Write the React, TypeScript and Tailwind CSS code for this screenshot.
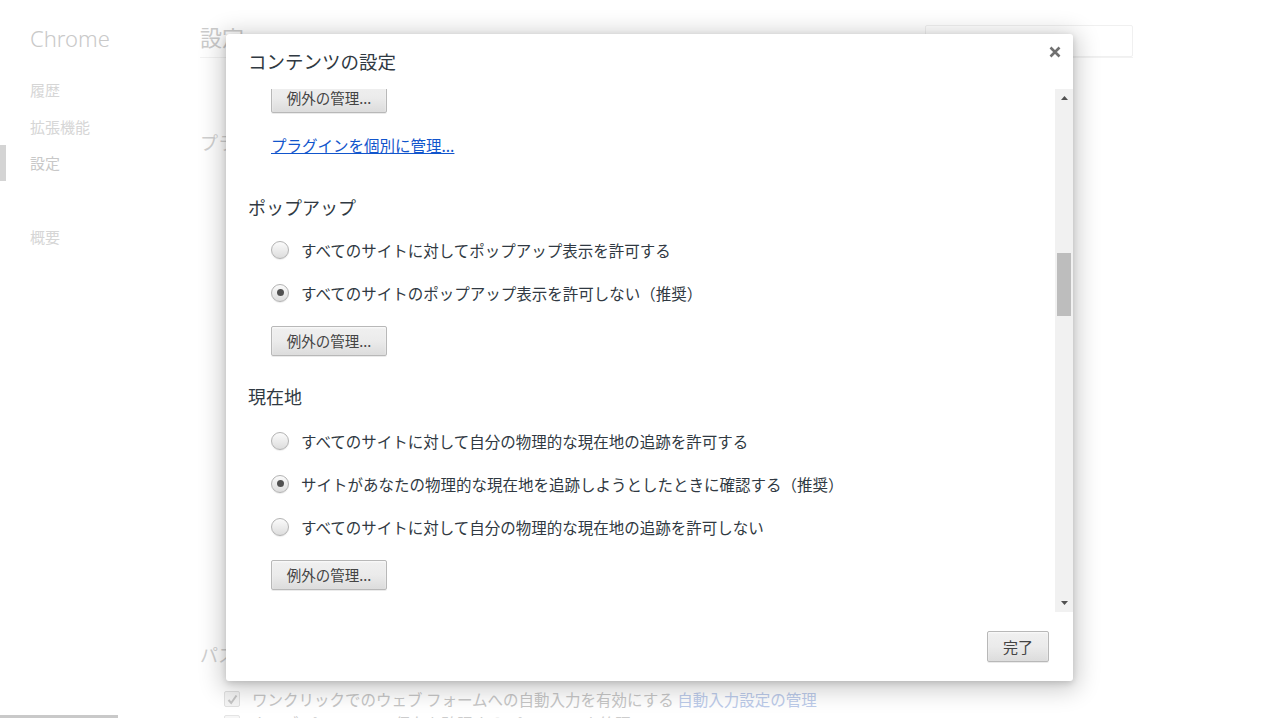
import React from "react";

const jp = "font-['Noto_Sans_CJK_JP','Noto_Sans',sans-serif]";

function Radio({ checked = false }: { checked?: boolean }) {
  return (
    <span className="flex h-[18px] w-[18px] shrink-0 items-center justify-center rounded-full border border-[#b3b3b3] bg-linear-to-b from-[#fbfbfb] to-[#dddddd] shadow-[0_1px_1px_rgba(0,0,0,0.08)]">
      {checked && <span className="h-[7px] w-[7px] rounded-full bg-[#505050] shadow-[0_0_1px_#fff]" />}
    </span>
  );
}

function RadioRow({ label, checked }: { label: string; checked?: boolean }) {
  return (
    <label className="flex h-[43px] items-center gap-[12px] pl-[23px]">
      <Radio checked={checked} />
      <span className="text-[15.5px] leading-[22px] text-[#303942]">{label}</span>
    </label>
  );
}

function ChromeButton({ children, className = "" }: { children: React.ReactNode; className?: string }) {
  return (
    <button
      className={
        "rounded-[2px] border border-[#b8b8b8] bg-linear-to-b from-[#f0f0f0] via-[#ebebeb] to-[#dcdcdc] text-[#444] shadow-[0_1px_0_rgba(0,0,0,0.08),inset_0_1px_2px_rgba(255,255,255,0.75)] " +
        className
      }
    >
      {children}
    </button>
  );
}

function ExceptionsButton({ className = "" }: { className?: string }) {
  return (
    <div className={"pl-[23px] " + className}>
      <ChromeButton className="h-[30px] w-[116px] text-[14.5px] leading-[28px]">例外の管理...</ChromeButton>
    </div>
  );
}

function Arrow({ down = false }: { down?: boolean }) {
  return (
    <div className="flex h-[18px] items-center justify-center">
      <svg width="7" height="4" viewBox="0 0 7 4">
        <path d={down ? "M0 0 L7 0 L3.5 4 Z" : "M0 4 L3.5 0 L7 4 Z"} fill="#505050" />
      </svg>
    </div>
  );
}

function Background() {
  const nav = ["履歴", "拡張機能"];
  return (
    <div className="flex h-[718px] w-[1280px] overflow-hidden bg-white">
      <aside className="flex h-full w-[200px] shrink-0 flex-col">
        <div className="pl-[30px] pt-[22px] font-['Noto_Sans',sans-serif] text-[22px] font-light leading-[32px] text-[#c9c9c9]">
          Chrome
        </div>
        <ul className="mt-[17px] flex flex-col text-[15px] leading-[22px]">
          {nav.map((n) => (
            <li key={n} className="flex h-[37px] items-center pl-[30px] text-[#d6d6d6]">
              {n}
            </li>
          ))}
          <li className="flex h-[36px] items-center border-l-[6px] border-[#d4d4d4] pl-[24px] text-[#c8c8c8]">設定</li>
          <li className="mt-[37px] flex h-[37px] items-center pl-[30px] text-[#d6d6d6]">概要</li>
        </ul>
        <div className="mt-auto h-[3px] w-[118px] bg-[#c9c9c9]" />
      </aside>
      <main className="flex min-w-0 flex-1 flex-col pr-[147px]">
        <header className="flex h-[66px] items-start justify-between border-b border-[#f2f2f2] pt-[22px]">
          <h1 className="text-[22px] leading-[28px] text-[#cbcbcb]">設定</h1>
          <div className="mt-[3px] h-[32px] w-[208px] rounded-[2px] border border-[#f0f0f0]" />
        </header>
        <h2 className="mt-[71px] text-[18px] leading-[26px] text-[#d0d0d0]">プライバシー</h2>
        <h2 className="mt-[486px] text-[18px] leading-[26px] text-[#d0d0d0]">パスワードとフォーム</h2>
        <div className="mt-[21px] flex items-center gap-[12px] pl-[24px]">
          <span className="flex h-[16px] w-[16px] items-center justify-center rounded-[2px] border border-[#e0e0e0] bg-[#f4f4f4]">
            <svg width="11" height="11" viewBox="0 0 11 11">
              <path d="M1.5 6 L4.2 9 L9.5 1.5" fill="none" stroke="#c4c4c4" strokeWidth="2" />
            </svg>
          </span>
          <span className="whitespace-nowrap text-[15.5px] leading-[22px] text-[#c6c6c6]">
            ワンクリックでのウェブ フォームへの自動入力を有効にする <span className="text-[#bccbea]">自動入力設定の管理</span>
          </span>
        </div>
        <div className="mt-[2px] flex items-center gap-[12px] pl-[24px]">
          <span className="h-[16px] w-[16px] rounded-[2px] border border-[#e4e4e4] bg-[#f6f6f6]" />
          <span className="whitespace-nowrap text-[15.5px] leading-[22px] text-[#cccccc]">
            ウェブ パスワードの保存を確認する パスワードを管理
          </span>
        </div>
      </main>
    </div>
  );
}

export default function App() {
  return (
    <div className={"relative h-[718px] w-[1280px] overflow-hidden " + jp}>
      <Background />
      <div className="absolute inset-0 flex items-start pl-[226px] pt-[34px]">
        <div className="relative flex h-[647px] w-[847px] flex-col overflow-hidden rounded-[3px] bg-white shadow-[0_4px_23px_5px_rgba(0,0,0,0.2),0_2px_6px_rgba(0,0,0,0.15)]">
          <div className="h-[55px] shrink-0 pl-[22px] pt-[13px]">
            <h1 className="text-[18.5px] leading-[28px] text-[#303942]">コンテンツの設定</h1>
          </div>
          <button className="absolute right-[11px] top-[11px] flex h-[14px] w-[14px] items-center justify-center">
            <svg width="12" height="12" viewBox="0 0 12 12">
              <path d="M1.5 1.5 L10.5 10.5 M10.5 1.5 L1.5 10.5" stroke="#707070" strokeWidth="2.6" />
            </svg>
          </button>

          <div className="flex h-[523px] shrink-0">
            <div className="min-w-0 flex-1 overflow-hidden pl-[22px]">
              <ExceptionsButton className="-mt-[6px]" />
              <div className="mt-[21px] pl-[23px] text-[15.5px] leading-[22px]">
                <a className="text-[#1155cc] underline">プラグインを個別に管理...</a>
              </div>

              <h2 className="mt-[38px] text-[18px] leading-[27px] text-[#303942]">ポップアップ</h2>
              <div className="mt-[7px] flex flex-col">
                <RadioRow label="すべてのサイトに対してポップアップ表示を許可する" />
                <RadioRow label="すべてのサイトのポップアップ表示を許可しない（推奨）" checked />
              </div>
              <ExceptionsButton className="mt-[12px]" />

              <h2 className="mt-[27px] text-[18px] leading-[27px] text-[#303942]">現在地</h2>
              <div className="mt-[9px] flex flex-col">
                <RadioRow label="すべてのサイトに対して自分の物理的な現在地の追跡を許可する" />
                <RadioRow label="サイトがあなたの物理的な現在地を追跡しようとしたときに確認する（推奨）" checked />
                <RadioRow label="すべてのサイトに対して自分の物理的な現在地の追跡を許可しない" />
              </div>
              <ExceptionsButton className="mt-[12px]" />

              <h2 className="mt-[30px] text-[18px] leading-[27px] text-[#303942]">通知</h2>
            </div>
            <div className="flex w-[18px] shrink-0 flex-col bg-[#f1f1f1]">
              <Arrow />
              <div className="flex-1 px-[2px]">
                <div className="mt-[146px] h-[63px] bg-[#bdbdbd]" />
              </div>
              <Arrow down />
            </div>
          </div>

          <div className="flex flex-1 items-start justify-end pr-[24px] pt-[19px]">
            <ChromeButton className="h-[31px] w-[62px] text-[15px] leading-[29px]">完了</ChromeButton>
          </div>
        </div>
      </div>
    </div>
  );
}
